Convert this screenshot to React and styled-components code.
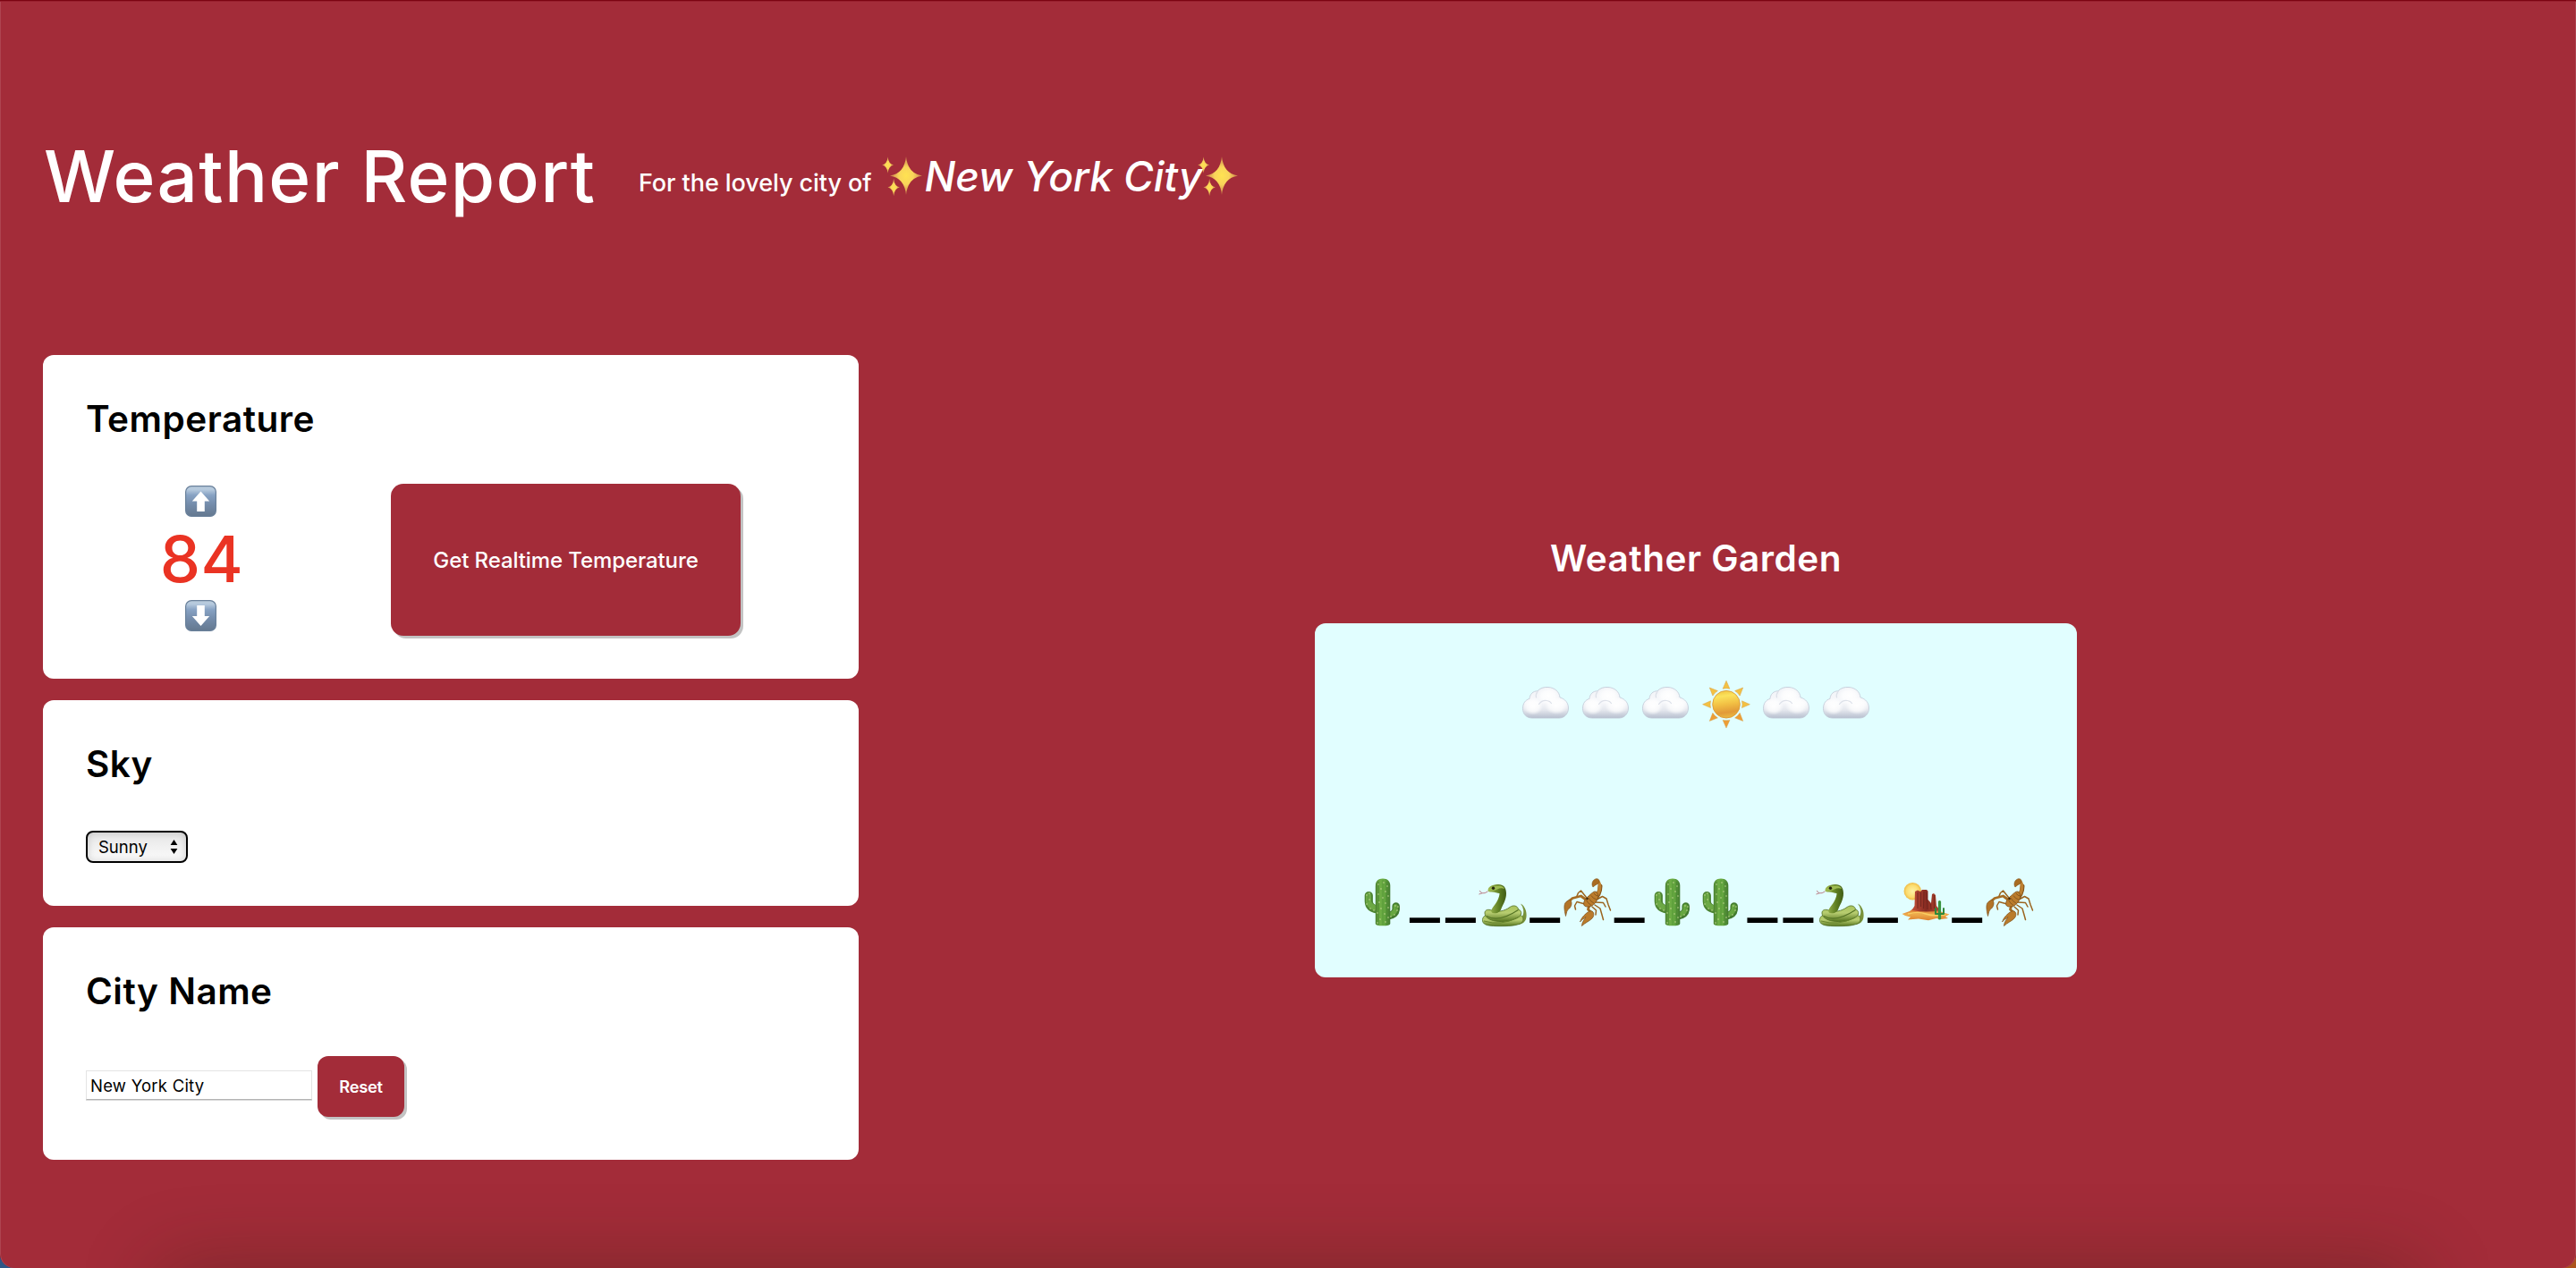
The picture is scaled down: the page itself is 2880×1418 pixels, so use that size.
import React from 'react';
import styled, { createGlobalStyle } from 'styled-components';

const system = 'Inter, "Liberation Sans", sans-serif';
const brand = '#a32c39';

const GlobalStyle = createGlobalStyle`
  * { box-sizing: border-box; }
  body { margin: 0; background: linear-gradient(90deg, #2f5686 50%, #ad541d 50%); }
  h1, h2, p { margin: 0; }
`;

const Page = styled.div`
  position: relative;
  height: 1418px;
  overflow: hidden;
  background: ${brand};
  border-radius: 0 0 16px 16px;
  box-shadow: inset 0 1px 0 #7c0412, inset 0 2px 0 #98202e, inset 1px 0 0 #ae4450, inset -1px 0 0 #ae4450;
  font-family: ${system};

  &::after {
    content: '';
    position: absolute;
    top: 100%;
    left: 190px;
    right: 190px;
    height: 100px;
    box-shadow: 0 10px 90px 10px rgba(40, 30, 10, 0.33);
  }
`;

const Header = styled.header`
  display: flex;
  align-items: center;
  height: 397px;
  padding: 0 0 3px 49px;
  color: #fff;
`;

const PageTitle = styled.h1`
  width: 665px;
  font-size: 80px;
  font-weight: 500;
  line-height: 96px;
  letter-spacing: 1.3px;
  white-space: nowrap;
`;

const Tagline = styled.p`
  display: flex;
  align-items: baseline;
  white-space: nowrap;
`;

const TaglineText = styled.span`
  width: 271.5px;
  font-size: 27px;
  font-weight: 500;
  line-height: 34px;
  letter-spacing: -0.07px;
`;

const CityName = styled.em`
  width: 308px;
  padding-left: 3px;
  font-size: 46px;
  font-weight: 500;
  line-height: 60px;
  letter-spacing: -0.1px;
`;

const SparkleSvg = styled.svg`
  flex: none;
  align-self: center;
  width: 45px;
  height: 45px;
`;

const Main = styled.main`
  display: flex;
  padding: 0 48px;
`;

const Controls = styled.div`
  display: flex;
  flex-direction: column;
  gap: 24px;
  width: 912px;
`;

const Card = styled.section`
  display: flex;
  flex-direction: column;
  align-items: flex-start;
  padding: 48px;
  background: #fff;
  border-radius: 12px;
`;

const SectionTitle = styled.h2`
  margin-bottom: 49px;
  color: ${p => p.$color || '#000'};
  font-size: 40.5px;
  font-weight: 600;
  line-height: 47px;
  letter-spacing: 0.5px;
`;

const TemperatureRow = styled.div`
  display: flex;
  gap: 84px;
  height: 170px;
`;

const Stepper = styled.div`
  display: flex;
  flex-direction: column;
  align-items: center;
  width: 257px;
  padding-top: 2px;
`;

const Degrees = styled.span`
  padding-left: 2px;
  color: #ea3323;
  font-size: 72px;
  font-weight: 500;
  line-height: 93px;
  letter-spacing: 0.5px;
`;

const ArrowSvg = styled.svg`
  display: block;
  width: 35px;
  height: 35px;
`;

const Button = styled.button`
  width: ${p => p.$width}px;
  height: ${p => p.$height}px;
  padding: 0;
  border: 0;
  border-radius: ${p => p.$radius}px;
  background: ${brand};
  box-shadow: 3px 3px 0 #c3c3c3;
  color: #fff;
  font-family: ${system};
  font-size: ${p => p.$size}px;
  font-weight: ${p => p.$weight};
  letter-spacing: ${p => p.$tracking}px;
`;

const SelectBox = styled.div`
  display: flex;
  align-items: center;
  justify-content: space-between;
  width: 114px;
  height: 36px;
  margin-top: 2px;
  padding: 0 9px 0 12px;
  border: 2px solid #000;
  border-radius: 8px;
  background: linear-gradient(#e5e5e5, #fcfcfc);
  box-shadow: inset 0 0 8px rgba(0, 0, 0, 0.17);
  color: #000;
  font-size: 18.5px;
`;

const CityRow = styled.div`
  display: flex;
  align-items: center;
  gap: 6px;
  height: 68px;
`;

const CityInput = styled.input`
  width: 253px;
  height: 33px;
  margin: 0 0 3px;
  padding: 0 4px;
  border: 1px solid #e4e4e4;
  border-bottom: 1px solid #b3b3b3;
  border-radius: 0;
  outline: 0;
  box-shadow: 0 1px 0 #dcdcdc;
  background: #fff;
  color: #000;
  font-family: ${system};
  font-size: 18.5px;
  letter-spacing: 0.23px;
`;

const GardenArea = styled.section`
  display: flex;
  flex: 1;
  flex-direction: column;
  align-items: center;
  justify-content: center;
`;

const Garden = styled.div`
  display: flex;
  flex-direction: column;
  align-items: center;
  justify-content: space-between;
  width: 852px;
  height: 396px;
  padding: 64px 0 57px;
  border-radius: 12px;
  background: #e1feff;
`;

const Sky = styled.div`
  display: flex;
  gap: 15.1px;
`;

const SkyIcon = styled.svg`
  width: 52px;
  height: 54px;
  overflow: visible;
`;

const Ground = styled.div`
  display: flex;
  height: 54px;
`;

const GroundIcon = styled.svg`
  width: 54.3px;
  height: 54px;
  overflow: visible;
`;

const Blank = styled.span`
  width: 40.1px;
  color: #000;
  font-family: Roboto, "Liberation Sans", sans-serif;
  font-size: 76px;
  line-height: 36px;
  text-align: center;
`;

const star = (x, y, rx, ry) =>
  `M${x} ${y - ry}Q${x + rx * 0.1} ${y - ry * 0.12} ${x + rx} ${y}Q${x + rx * 0.1} ${y + ry * 0.12} ${x} ${y + ry}Q${x - rx * 0.1} ${y + ry * 0.12} ${x - rx} ${y}Q${x - rx * 0.1} ${y - ry * 0.12} ${x} ${y - ry}Z`;

const Sparkles = () => (
  <SparkleSvg viewBox="0 0 45 45">
    <defs>
      <radialGradient id="spark">
        <stop offset="0" stopColor="#ffe251" />
        <stop offset="0.45" stopColor="#f9d45a" />
        <stop offset="1" stopColor="#c87a4c" />
      </radialGradient>
    </defs>
    <g fill="url(#spark)">
      <path d={star(27, 21.5, 18, 21.5)} />
      <path d={star(6.6, 9.5, 6.5, 9.3)} />
      <path d={star(13.2, 34.5, 6.8, 9.8)} />
    </g>
  </SparkleSvg>
);

const Arrow = ({ down }) => (
  <ArrowSvg viewBox="0 0 35 35">
    <defs>
      <linearGradient id="key" x2="0" y2="1">
        <stop offset="0" stopColor="#b9cbdb" />
        <stop offset="0.12" stopColor="#b5c9dd" />
        <stop offset="0.3" stopColor="#87a2c3" />
        <stop offset="0.6" stopColor="#748cab" />
        <stop offset="1" stopColor="#64788f" />
      </linearGradient>
    </defs>
    <rect x="0.6" y="0.6" width="33.8" height="33.8" rx="6.5" fill="url(#key)" stroke="#6a819b" strokeWidth="1.2" />
    <path
      d={down ? 'M13.2 6h8.6v12h5.4L17.5 29 7.8 18h5.4z' : 'M17.5 6.4l9.7 11.2h-5.4V29h-8.6V17.6H7.8z'}
      fill="#fff"
    />
  </ArrowSvg>
);

const SelectArrows = () => (
  <svg width="9" height="18" viewBox="0 0 9 18">
    <path d="M4.5 1L8.4 7H.6zM4.5 17L.6 11h7.8z" />
  </svg>
);

const Cloud = () => (
  <SkyIcon viewBox="0 0 52 54">
    <defs>
      <linearGradient id="cloud" x2="0" y2="1">
        <stop offset="0" stopColor="#f1f3f7" />
        <stop offset="0.5" stopColor="#f7f8fb" />
        <stop offset="0.75" stopColor="#e3e6ed" />
        <stop offset="1" stopColor="#b7bfcf" />
      </linearGradient>
      <radialGradient id="puff" cx="0.5" cy="0.5" r="0.5">
        <stop offset="0" stopColor="#fff" />
        <stop offset="0.6" stopColor="#fff" stopOpacity="0.7" />
        <stop offset="1" stopColor="#fff" stopOpacity="0" />
      </radialGradient>
    </defs>
    <path
      d="M11 42C4.500 42 .5 37.500.5 31.300.5 25.500 3.500 21.600 8 20.500 8.300 15.300 12 11.700 17 11.800 19.500 8.700 24 7 29 7.500 36 8 41.500 12.500 42 19 47.800 20.500 51.600 25.300 51.500 31 51.400 37.300 47 42 41 42Z"
      fill="url(#cloud)" stroke="#c0c8d6" strokeWidth="0.8"
    />
    <ellipse cx="29" cy="17" rx="12" ry="9.500" fill="url(#puff)" />
    <ellipse cx="12" cy="29" rx="11" ry="9.500" fill="url(#puff)" />
    <ellipse cx="38" cy="28" rx="13" ry="10" fill="url(#puff)" />
    <path d="M18.500 26.500Q22 21.500 27.500 22.500Q31 23 32.500 25.500M17 12.500Q14.500 15.500 15.500 19" fill="none" stroke="#dde1e9" strokeWidth="1.2" strokeLinecap="round" />
  </SkyIcon>
);

const rays = [0, 45, 90, 135, 180, 225, 270, 315];

const Sun = () => (
  <SkyIcon viewBox="0 0 52 54">
    <defs>
      <linearGradient id="disc" x2="0.150" y2="1">
        <stop offset="0" stopColor="#f0bd3a" />
        <stop offset="0.250" stopColor="#fbe35c" />
        <stop offset="0.550" stopColor="#f2c044" />
        <stop offset="0.850" stopColor="#e29a38" />
        <stop offset="1" stopColor="#e8b23f" />
      </linearGradient>
    </defs>
    {rays.map(a => (
      <path
        key={a}
        d="M26 .3L29.900 9.200Q26 8.200 22.100 9.200Z"
        transform={`rotate(${a} 26 26.700)`}
        fill={a > 90 && a < 270 ? '#ec9d36' : '#f3c142'}
        stroke="#dba045" strokeWidth="0.500"
      />
    ))}
    <circle cx="26" cy="26.700" r="15.300" fill="url(#disc)" stroke="#dd9c38" strokeWidth="0.900" />
  </SkyIcon>
);

const spines = [
  [23, 7], [29, 5], [33, 9], [26, 12], [31, 15], [23, 18], [34, 20], [28, 22], [24, 27], [31, 28], [34, 33],
  [26, 34], [22, 39], [30, 40], [34, 44], [25, 46], [31, 49], [10, 19], [13, 24], [10, 29], [14, 34], [18, 36],
  [42, 31], [44, 36], [41, 41], [37, 43], [13, 17], [22, 50], [45, 32],
];

const Cactus = () => (
  <GroundIcon viewBox="0 0 54.300 54">
    <defs>
      <linearGradient id="trunk">
        <stop offset="0" stopColor="#4a8030" />
        <stop offset="0.300" stopColor="#6fae45" />
        <stop offset="0.600" stopColor="#65a840" />
        <stop offset="1" stopColor="#42792e" />
      </linearGradient>
    </defs>
    <g fill="none" strokeLinecap="round">
      <path d="M12.300 19.500V26Q12.500 33.500 22 35" stroke="#4d8432" strokeWidth="9.200" />
      <path d="M12 19.500V26Q13 32.500 22 34" stroke="#6ca945" strokeWidth="6" />
      <path d="M42.700 31.500V35Q42 41 34 42.300" stroke="#437b2e" strokeWidth="8.500" />
      <path d="M42.300 31.500V35Q41 40 34 41.500" stroke="#67a740" strokeWidth="5" />
    </g>
    <path d="M19.800 9C19.800 3.500 22.500.5 28 .5S36.300 3.500 36.300 9V51Q36 53.300 28 53.300T19.800 51Z" fill="url(#trunk)" />
    <path d="M23.500 4V52M28 2V52.500M32.500 4V52M11.500 18V27M43 31V36" stroke="#3f7c2b" strokeWidth="0.800" opacity="0.450" />
    <g fill="#d3dda0">
      {spines.map(([x, y]) => <circle key={`${x}-${y}`} cx={x} cy={y} r="0.700" />)}
    </g>
  </GroundIcon>
);

const Snake = () => (
  <GroundIcon viewBox="0 0 54.300 54">
    <defs>
      <linearGradient id="coil" x2="0" y2="1">
        <stop offset="0" stopColor="#a9c45c" />
        <stop offset="0.450" stopColor="#b7cd70" />
        <stop offset="1" stopColor="#56751f" />
      </linearGradient>
      <linearGradient id="neck" x1="0" x2="1">
        <stop offset="0" stopColor="#a5bd55" />
        <stop offset="0.600" stopColor="#5e7f22" />
        <stop offset="1" stopColor="#405c15" />
      </linearGradient>
    </defs>
    <path d="M47 28.500C52 31 54.500 38 53.300 44.500C52.500 48.500 50 51 45 52L41 47C48 46 50.500 42 50.300 37Q50 32 47 28.500Z" fill="#78923a" />
    <path d="M4.500 48C4 43.500 7 40.500 13 41H43C49 40.500 51.500 45 49 49C46.500 52.500 38 53.700 25 53.700C12 53.700 5.500 53 4.500 48Z" fill="url(#coil)" stroke="#4c6820" strokeWidth="0.700" />
    <path d="M7 39C7 35.500 10.500 34.500 15 36C21 38.500 29 37 35 32.500C39 29.500 44 31 44.500 35C48.500 36 49 41 45 43.500C38 48 28 49.500 19 48C12 47 7 43.500 7 39Z" fill="url(#coil)" stroke="#506d20" strokeWidth="0.800" />
    <path d="M9 42.500C18 47.500 31 44.500 44.500 35.500" fill="none" stroke="#557425" strokeWidth="1.100" />
    <path d="M6 48Q25 54 44 44" fill="none" stroke="#68862c" strokeWidth="1" />
    <path d="M10.500 14C10.500 9.500 15 7.500 21 7C27.500 6.500 31 10 31 17C31 24.500 27.500 29 25.500 34C24.500 38 20.500 40 16 39C13.500 38.500 14 35.500 16.500 32C21 26.500 23.500 21 23.500 17C21 17 18.500 15.500 15 15.500C12.500 15.500 10.500 15.500 10.500 14Z" fill="url(#neck)" />
    <path d="M10.800 13.200Q16 8 24 8.500Q28 9 29 12Q25 10.500 21 12.500T10.800 13.200Z" fill="#9dbb52" />
    <circle cx="16.500" cy="11.300" r="1.700" fill="#27280e" />
    <path d="M10.500 14.800Q7 17.500 4 16.800L.500 18M4 16.800L1 14" fill="none" stroke="#b5707a" strokeWidth="0.900" />
  </GroundIcon>
);

const Scorpion = () => (
  <GroundIcon viewBox="0 0 54.300 54">
    <g fill="none" stroke="#7c4d14" strokeLinecap="round" strokeLinejoin="round">
      <path d="M26.500 21.500L20.500 14L17.500 16.500L16 20M25 29L16 26.500L13.500 31L14.500 35M39 23.500L44.500 20.500L49 23L51 29.500L53.500 36M37 27L45.500 27.500L48 32M36 30L42 34L44 41L45.500 46.500M33 32L37.500 36L37 41" stroke="#9b641f" strokeWidth="1.500" />
      <path d="M30 27L20.500 20L11 22.500L6 27" stroke="#a66b22" strokeWidth="2.800" />
      <path d="M30 30L28.500 35L32 38.500" stroke="#a66b22" strokeWidth="2.800" />
      <path d="M33.500 26Q42 19 42 9" stroke="#87561b" strokeWidth="5" />
      <path d="M34 25Q41.500 18 41.500 9.500Q41.500 3.500 37.500 3.300" stroke="#bd8031" strokeWidth="3.600" />
    </g>
    <path d="M34 10C32 7 33 2 37.500.7C41 .3 42.500 4 39 6.500Q36 8 34 10Z" fill="#a96c22" stroke="#7e5017" strokeWidth="0.600" />
    <path d="M37 15C41 18 40.500 22 37 27C34 31.500 28 33.500 24.500 31C22.500 28.500 24 24.500 28 21C31.500 18 34.500 14.500 37 15Z" fill="#bb7c2c" stroke="#7b4e18" strokeWidth="0.800" />
    <path d="M35 17Q37 20 39.500 20M32 19.500Q34 23 38 24M29 22Q31 26 35.500 28.500M26.500 24.500Q28 28 32 30.500" fill="none" stroke="#83541d" strokeWidth="0.900" />
    <circle cx="27.500" cy="23" r="1.200" fill="#3c2409" />
    <path d="M8 24C11 26 10.500 31 7.500 34C4.500 35.500 4.500 39 3.500 42.500C2 36 .7 29.500 4 26.500Z" fill="#b27428" stroke="#7b4e18" strokeWidth="0.700" />
    <path d="M30 37C35 35.500 36 41 33.500 44.500C30.500 48 25 50 21.500 53.500C21.500 49.500 24 47 26 43.500C24 45.500 21 46.500 19.500 49C21 44 26 39 30 37Z" fill="#ba7b2b" stroke="#7b4e18" strokeWidth="0.700" />
  </GroundIcon>
);

const Desert = () => (
  <GroundIcon viewBox="0 0 54.300 54">
    <defs>
      <radialGradient id="desertSun">
        <stop offset="0" stopColor="#fdf3a5" />
        <stop offset="0.700" stopColor="#fbdc6f" />
        <stop offset="1" stopColor="#f0bb45" />
      </radialGradient>
      <linearGradient id="sand" x2="0" y2="1">
        <stop offset="0" stopColor="#d7692b" />
        <stop offset="0.500" stopColor="#edab4b" />
        <stop offset="1" stopColor="#dd812e" />
      </linearGradient>
      <linearGradient id="rock">
        <stop offset="0" stopColor="#c25038" />
        <stop offset="0.500" stopColor="#872b22" />
        <stop offset="1" stopColor="#b24a31" />
      </linearGradient>
    </defs>
    <circle cx="13.300" cy="14.700" r="9.700" fill="url(#desertSun)" />
    <path d="M1.500 40L10 37L14 34H41L46 38L54.500 40.500L50 43L53 45L45 46L40 45L31 47.300L20 45.500L8 46.500L11 43.500L5 42Z" fill="url(#sand)" />
    <path d="M12.500 36L15.500 31L16 15L19 13.500L22 15L24 13H29L30.500 14.500V24L34 28L35 18L37 17L39 19L40 31L44 36Q30 39 12.500 36Z" fill="url(#rock)" />
    <path d="M19 16V34M22.500 16V32M26 15L25.500 34M29 16L30 35M33.500 29L34 35M37.500 19V34" stroke="#67221c" strokeWidth="1.100" opacity="0.700" />
    <path d="M8 40Q20 37 28 40T50 41" fill="none" stroke="#f9cd61" strokeWidth="1.500" />
    <g fill="none" stroke="#2f883a" strokeLinecap="round" strokeLinejoin="round">
      <path d="M43.500 26.500V45" stroke="#3a9440" strokeWidth="3.200" />
      <path d="M39 34V40H43M48 34V40H44" strokeWidth="2" />
    </g>
  </GroundIcon>
);

const icons = { cloud: Cloud, sun: Sun, cactus: Cactus, snake: Snake, scorpion: Scorpion, desert: Desert };
const sky = ['cloud', 'cloud', 'cloud', 'sun', 'cloud', 'cloud'];
const ground = [
  'cactus', '_', '_', 'snake', '_', 'scorpion', '_', 'cactus', 'cactus', '_', '_', 'snake', '_', 'desert', '_', 'scorpion',
];

const Scene = ({ items }) =>
  items.map((name, i) => {
    const Icon = icons[name];
    return Icon ? <Icon key={i} /> : <Blank key={i}>{name}</Blank>;
  });

export default function App() {
  const city = 'New York City';
  return (
    <>
      <GlobalStyle />
      <Page>
        <Header>
          <PageTitle>Weather Report</PageTitle>
          <Tagline>
            <TaglineText>For the lovely city of</TaglineText>
            <Sparkles />
            <CityName>{city}</CityName>
            <Sparkles />
          </Tagline>
        </Header>
        <Main>
          <Controls>
            <Card>
              <SectionTitle>Temperature</SectionTitle>
              <TemperatureRow>
                <Stepper>
                  <Arrow />
                  <Degrees>84</Degrees>
                  <Arrow down />
                </Stepper>
                <Button $width={391} $height={170} $radius={14} $size={24} $weight={500} $tracking={-0.1}>
                  Get Realtime Temperature
                </Button>
              </TemperatureRow>
            </Card>
            <Card>
              <SectionTitle>Sky</SectionTitle>
              <SelectBox>
                Sunny
                <SelectArrows />
              </SelectBox>
            </Card>
            <Card>
              <SectionTitle>City Name</SectionTitle>
              <CityRow>
                <CityInput defaultValue={city} />
                <Button $width={97} $height={68} $radius={12} $size={18.3} $weight={600} $tracking={-0.3}>
                  Reset
                </Button>
              </CityRow>
            </Card>
          </Controls>
          <GardenArea>
            <SectionTitle $color="#fff">Weather Garden</SectionTitle>
            <Garden>
              <Sky><Scene items={sky} /></Sky>
              <Ground><Scene items={ground} /></Ground>
            </Garden>
          </GardenArea>
        </Main>
      </Page>
    </>
  );
}
